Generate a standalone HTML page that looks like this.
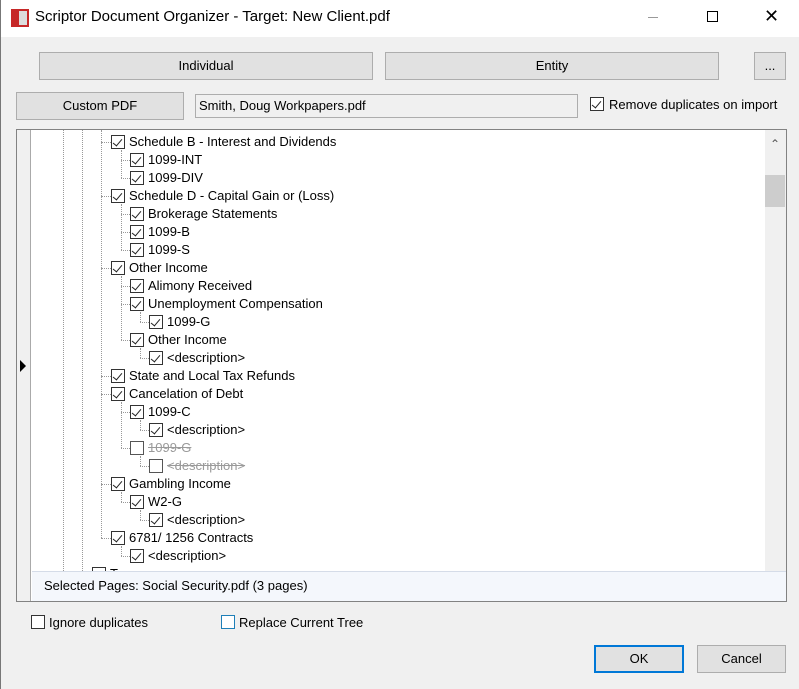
<!DOCTYPE html>
<html><head><style>
*{margin:0;padding:0;box-sizing:border-box}
body{width:799px;height:689px;background:#f0f0f0;font-family:"Liberation Sans",sans-serif;font-size:13px;color:#000;position:relative;overflow:hidden}
.a{position:absolute}
.btn{position:absolute;background:#e1e1e1;border:1px solid #adadad;text-align:center;font-size:13px}
.cb{position:absolute;width:14px;height:14px;border:1px solid #333;background:#fff}
.cb.c::after{content:"";position:absolute;left:3px;top:1px;width:4px;height:8px;border-right:1.3px solid #222;border-bottom:1.3px solid #222;transform:rotate(40deg)}
.r{position:absolute;height:18px;line-height:18px;white-space:nowrap}
.h{position:absolute;border-top:1px dotted #999;height:0}
.v{position:absolute;border-left:1px dotted #999;width:0}
.g{color:#9a9a9a;text-decoration:line-through}
</style></head><body>
<div class="a" style="left:0;top:0;width:799px;height:37px;background:#fff"></div>
<div class="a" style="left:0;top:0;width:1px;height:689px;background:#777"></div>
<div class="a" style="left:11px;top:9px;width:18px;height:18px;background:#c62828"></div>
<div class="a" style="left:19px;top:11px;width:8px;height:14px;background:#ddd"></div>
<div class="a" style="left:35px;top:8px;font-size:15px">Scriptor Document Organizer - Target: New Client.pdf</div>
<div class="a" style="left:648px;top:17px;width:10px;height:1px;background:#999"></div>
<div class="a" style="left:707px;top:11px;width:11px;height:11px;border:1px solid #000"></div>
<div class="a" style="left:764px;top:6px;font-size:18px">✕</div>

<div class="btn" style="left:39px;top:52px;width:334px;height:28px;line-height:26px">Individual</div>
<div class="btn" style="left:385px;top:52px;width:334px;height:28px;line-height:26px">Entity</div>
<div class="btn" style="left:754px;top:52px;width:32px;height:28px;line-height:26px">...</div>
<div class="btn" style="left:16px;top:92px;width:168px;height:28px;line-height:26px">Custom PDF</div>
<div class="a" style="left:195px;top:94px;width:383px;height:24px;border:1px solid #adadad;background:#f0f0f0;padding-left:3px;line-height:22px">Smith, Doug Workpapers.pdf</div>
<div class="cb c" style="left:590px;top:97px"></div>
<div class="a" style="left:609px;top:97px">Remove duplicates on import</div>

<div class="a" style="left:16px;top:129px;width:771px;height:473px;border:1px solid #828282;background:#fff"></div>
<div class="a" style="left:17px;top:130px;width:14px;height:471px;background:#f0f0f0;border-right:1px solid #aaa"></div>
<div class="a" style="left:20px;top:360px;width:0;height:0;border-left:6px solid #000;border-top:6px solid transparent;border-bottom:6px solid transparent"></div>
<div class="a" style="left:765px;top:130px;width:21px;height:441px;background:#f0f0f0"></div>
<div class="a" style="left:770px;top:137px;font-size:12px;color:#555">⌃</div>
<div class="a" style="left:765px;top:175px;width:20px;height:32px;background:#cdcdcd"></div>

<div class="v" style="left:63px;top:130px;height:441px"></div>
<div class="v" style="left:82px;top:130px;height:441px"></div>
<div class="v" style="left:101px;top:130px;height:408px"></div>
<div class="v" style="left:121px;top:150px;height:28px"></div>
<div class="v" style="left:121px;top:204px;height:46px"></div>
<div class="v" style="left:121px;top:276px;height:64px"></div>
<div class="v" style="left:121px;top:402px;height:46px"></div>
<div class="v" style="left:121px;top:492px;height:10px"></div>
<div class="v" style="left:121px;top:546px;height:10px"></div>
<div class="v" style="left:140px;top:312px;height:10px"></div>
<div class="v" style="left:140px;top:348px;height:10px"></div>
<div class="v" style="left:140px;top:420px;height:10px"></div>
<div class="v" style="left:140px;top:456px;height:10px"></div>
<div class="v" style="left:140px;top:510px;height:10px"></div>

<!-- L1 -->
<div class="h" style="left:101px;top:142px;width:10px"></div><div class="cb c" style="left:111px;top:135px"></div><div class="r" style="left:129px;top:133px">Schedule B - Interest and Dividends</div>
<div class="h" style="left:121px;top:160px;width:9px"></div><div class="cb c" style="left:130px;top:153px"></div><div class="r" style="left:148px;top:151px">1099-INT</div>
<div class="h" style="left:121px;top:178px;width:9px"></div><div class="cb c" style="left:130px;top:171px"></div><div class="r" style="left:148px;top:169px">1099-DIV</div>
<div class="h" style="left:101px;top:196px;width:10px"></div><div class="cb c" style="left:111px;top:189px"></div><div class="r" style="left:129px;top:187px">Schedule D - Capital Gain or (Loss)</div>
<div class="h" style="left:121px;top:214px;width:9px"></div><div class="cb c" style="left:130px;top:207px"></div><div class="r" style="left:148px;top:205px">Brokerage Statements</div>
<div class="h" style="left:121px;top:232px;width:9px"></div><div class="cb c" style="left:130px;top:225px"></div><div class="r" style="left:148px;top:223px">1099-B</div>
<div class="h" style="left:121px;top:250px;width:9px"></div><div class="cb c" style="left:130px;top:243px"></div><div class="r" style="left:148px;top:241px">1099-S</div>
<div class="h" style="left:101px;top:268px;width:10px"></div><div class="cb c" style="left:111px;top:261px"></div><div class="r" style="left:129px;top:259px">Other Income</div>
<div class="h" style="left:121px;top:286px;width:9px"></div><div class="cb c" style="left:130px;top:279px"></div><div class="r" style="left:148px;top:277px">Alimony Received</div>
<div class="h" style="left:121px;top:304px;width:9px"></div><div class="cb c" style="left:130px;top:297px"></div><div class="r" style="left:148px;top:295px">Unemployment Compensation</div>
<div class="h" style="left:140px;top:322px;width:9px"></div><div class="cb c" style="left:149px;top:315px"></div><div class="r" style="left:167px;top:313px">1099-G</div>
<div class="h" style="left:121px;top:340px;width:9px"></div><div class="cb c" style="left:130px;top:333px"></div><div class="r" style="left:148px;top:331px">Other Income</div>
<div class="h" style="left:140px;top:358px;width:9px"></div><div class="cb c" style="left:149px;top:351px"></div><div class="r" style="left:167px;top:349px">&lt;description&gt;</div>
<div class="h" style="left:101px;top:376px;width:10px"></div><div class="cb c" style="left:111px;top:369px"></div><div class="r" style="left:129px;top:367px">State and Local Tax Refunds</div>
<div class="h" style="left:101px;top:394px;width:10px"></div><div class="cb c" style="left:111px;top:387px"></div><div class="r" style="left:129px;top:385px">Cancelation of Debt</div>
<div class="h" style="left:121px;top:412px;width:9px"></div><div class="cb c" style="left:130px;top:405px"></div><div class="r" style="left:148px;top:403px">1099-C</div>
<div class="h" style="left:140px;top:430px;width:9px"></div><div class="cb c" style="left:149px;top:423px"></div><div class="r" style="left:167px;top:421px">&lt;description&gt;</div>
<div class="h" style="left:121px;top:448px;width:9px"></div><div class="cb" style="left:130px;top:441px;border-color:#555"></div><div class="r g" style="left:148px;top:439px">1099-G</div>
<div class="h" style="left:140px;top:466px;width:9px"></div><div class="cb" style="left:149px;top:459px;border-color:#555"></div><div class="r g" style="left:167px;top:457px">&lt;description&gt;</div>
<div class="h" style="left:101px;top:484px;width:10px"></div><div class="cb c" style="left:111px;top:477px"></div><div class="r" style="left:129px;top:475px">Gambling Income</div>
<div class="h" style="left:121px;top:502px;width:9px"></div><div class="cb c" style="left:130px;top:495px"></div><div class="r" style="left:148px;top:493px">W2-G</div>
<div class="h" style="left:140px;top:520px;width:9px"></div><div class="cb c" style="left:149px;top:513px"></div><div class="r" style="left:167px;top:511px">&lt;description&gt;</div>
<div class="h" style="left:101px;top:538px;width:10px"></div><div class="cb c" style="left:111px;top:531px"></div><div class="r" style="left:129px;top:529px">6781/ 1256 Contracts</div>
<div class="h" style="left:121px;top:556px;width:9px"></div><div class="cb c" style="left:130px;top:549px"></div><div class="r" style="left:148px;top:547px">&lt;description&gt;</div>
<div class="cb" style="left:92px;top:567px"></div>
<div class="r" style="left:110px;top:565px">Taxes</div>

<div class="a" style="left:32px;top:571px;width:754px;height:30px;background:#f4f7fc;border-top:1px solid #d5dce8;padding-left:12px;line-height:28px">Selected Pages: Social Security.pdf (3 pages)</div>

<div class="cb" style="left:31px;top:615px"></div>
<div class="a" style="left:49px;top:615px">Ignore duplicates</div>
<div class="cb" style="left:221px;top:615px;border-color:#1e7fb8"></div>
<div class="a" style="left:239px;top:615px">Replace Current Tree</div>

<div class="btn" style="left:594px;top:645px;width:90px;height:28px;line-height:24px;border:2px solid #0078d7">OK</div>
<div class="btn" style="left:697px;top:645px;width:89px;height:28px;line-height:26px">Cancel</div>
</body></html>
